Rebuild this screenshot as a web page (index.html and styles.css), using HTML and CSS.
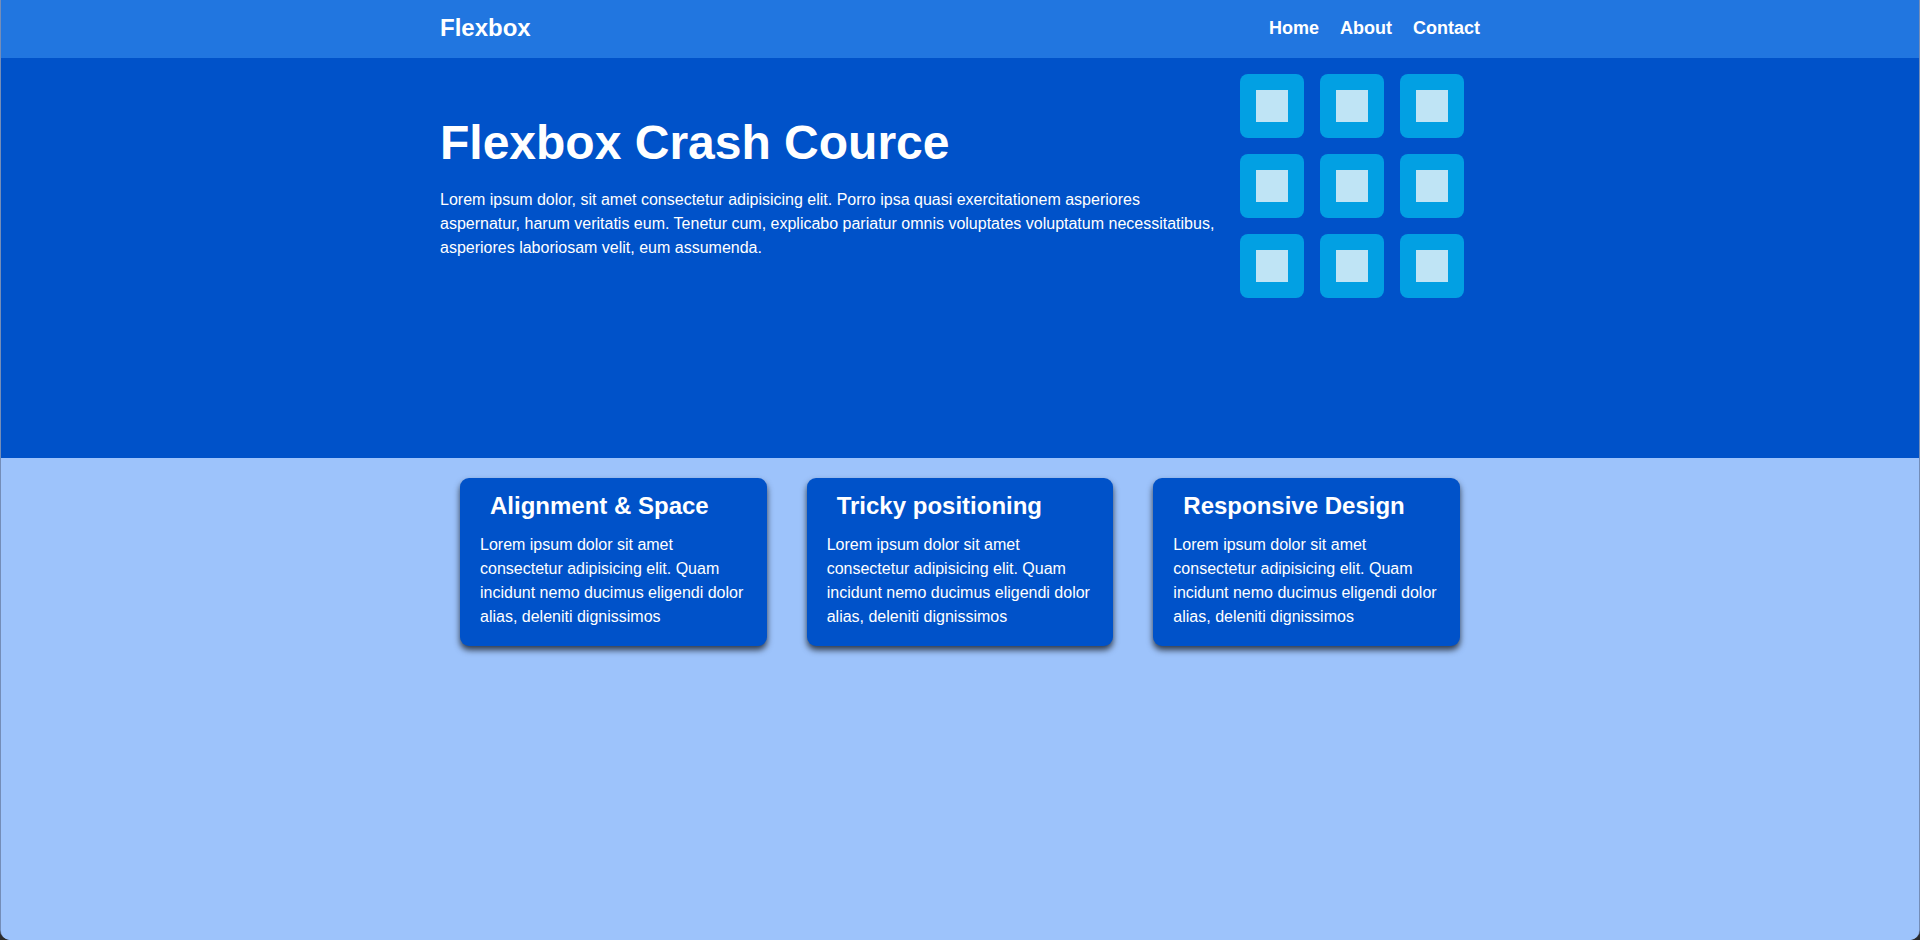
FILE: index.html
```html
<!DOCTYPE html>
<html lang="en">
<head>
<meta charset="UTF-8">
<title>Flexbox Crash Cource</title>
<link rel="stylesheet" href="styles.css">
</head>
<body>
<div class="window">
  <header class="navbar">
    <div class="container nav-inner">
      <h1 class="logo">Flexbox</h1>
      <nav>
        <ul class="nav-links">
          <li><a href="#">Home</a></li>
          <li><a href="#">About</a></li>
          <li><a href="#">Contact</a></li>
        </ul>
      </nav>
    </div>
  </header>

  <section class="showcase">
    <div class="container showcase-inner">
      <div class="showcase-text">
        <h1 class="showcase-title">Flexbox Crash Cource</h1>
        <p>Lorem ipsum dolor, sit amet consectetur adipisicing elit. Porro ipsa quasi exercitationem asperiores aspernatur, harum veritatis eum. Tenetur cum, explicabo pariatur omnis voluptates voluptatum necessitatibus, asperiores laboriosam velit, eum assumenda.</p>
      </div>
      <div class="tiles">
        <div class="tile"><span></span></div>
        <div class="tile"><span></span></div>
        <div class="tile"><span></span></div>
        <div class="tile"><span></span></div>
        <div class="tile"><span></span></div>
        <div class="tile"><span></span></div>
        <div class="tile"><span></span></div>
        <div class="tile"><span></span></div>
        <div class="tile"><span></span></div>
      </div>
    </div>
  </section>

  <section class="features">
    <div class="container features-inner">
      <div class="card">
        <h3>Alignment &amp; Space</h3>
        <p>Lorem ipsum dolor sit amet consectetur adipisicing elit. Quam incidunt nemo ducimus eligendi dolor alias, deleniti dignissimos</p>
      </div>
      <div class="card">
        <h3>Tricky positioning</h3>
        <p>Lorem ipsum dolor sit amet consectetur adipisicing elit. Quam incidunt nemo ducimus eligendi dolor alias, deleniti dignissimos</p>
      </div>
      <div class="card">
        <h3>Responsive Design</h3>
        <p>Lorem ipsum dolor sit amet consectetur adipisicing elit. Quam incidunt nemo ducimus eligendi dolor alias, deleniti dignissimos</p>
      </div>
    </div>
  </section>
</div>
</body>
</html>
```

FILE: styles.css
```css
* {
  box-sizing: border-box;
}

html, body {
  margin: 0;
  padding: 0;
  height: 100%;
}

body {
  background: #2b2b2b;
  font-family: "Liberation Sans", Arial, Helvetica, sans-serif;
  color: #fff;
  font-size: 16px;
  line-height: 1.5;
}

.window {
  height: 940px;
  display: flex;
  flex-direction: column;
  border-radius: 0 0 10px 10px;
  overflow: hidden;
  border-left: 1px solid rgba(40, 40, 60, 0.35);
  border-right: 1px solid rgba(40, 40, 60, 0.35);
  background: #9dc3fb;
}

.container {
  width: 1040px;
  margin: 0 auto;
}

/* Navbar */
.navbar {
  background: #2176e0;
  height: 58px;
  flex-shrink: 0;
}

.nav-inner {
  height: 100%;
  padding-bottom: 2px;
  display: flex;
  align-items: center;
  justify-content: space-between;
}

.logo {
  margin: 0;
  font-size: 24px;
  font-weight: bold;
  line-height: 1;
}

.nav-links {
  list-style: none;
  margin: 0;
  padding: 0;
  display: flex;
  gap: 21px;
}

.nav-links a {
  color: #fff;
  text-decoration: none;
  font-weight: bold;
  font-size: 18px;
}

/* Showcase */
.showcase {
  background: #0052c9;
  height: 400px;
  flex-shrink: 0;
}

.showcase-inner {
  display: flex;
  gap: 20px;
}

.showcase-text {
  width: 780px;
  padding-top: 57px;
}

.showcase-title {
  margin: 0 0 18px;
  font-size: 48px;
  line-height: 1.15;
  font-weight: bold;
}

.showcase-text p {
  margin: 0;
  font-size: 16px;
  line-height: 24px;
}

.tiles {
  width: 240px;
  padding-top: 16px;
  display: grid;
  grid-template-columns: repeat(3, 64px);
  grid-auto-rows: 64px;
  gap: 16px;
  align-content: start;
}

.tile {
  background: #02a0e3;
  border-radius: 8px;
  display: flex;
  align-items: center;
  justify-content: center;
}

.tile span {
  width: 32px;
  height: 32px;
  background: #bfe4f5;
}

/* Features */
.features {
  flex: 1;
  background: #9dc3fb;
}

.features-inner {
  display: flex;
}

.card {
  flex: 1;
  margin: 20px;
  padding: 14px 20px 1px;
  background: #0052c9;
  border-radius: 9px;
  box-shadow: 0 4px 6px rgba(0, 0, 0, 0.7);
}

.card h3 {
  margin: 0;
  padding-left: 10px;
  font-size: 24px;
  line-height: 1.15;
  font-weight: bold;
}

.card p {
  margin: 13px 0 16px;
  font-size: 16px;
  line-height: 24px;
}
```
